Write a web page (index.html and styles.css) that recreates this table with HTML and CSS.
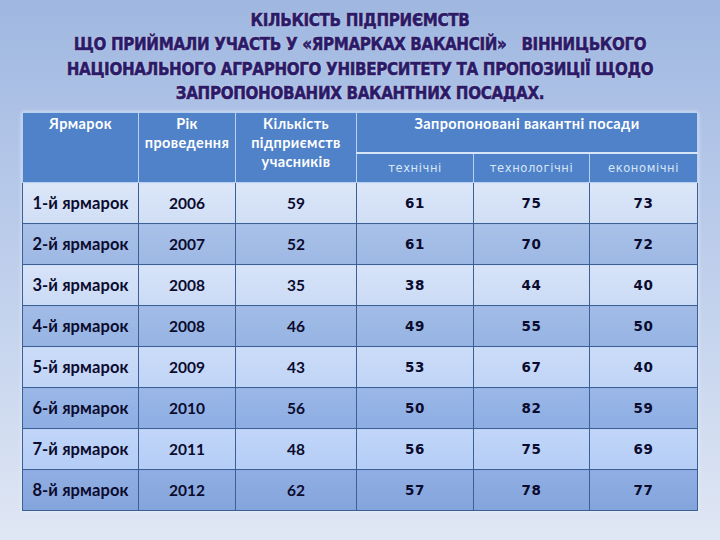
FILE: index.html
```html
<!DOCTYPE html>
<html lang="uk">
<head>
<meta charset="utf-8">
<title>Ярмарки вакансій</title>
<link rel="stylesheet" href="styles.css">
</head>
<body>
<div class="page">
  <h1 class="title">
    <span class="line">КІЛЬКІСТЬ ПІДПРИЄМСТВ</span>
    <span class="line">ЩО ПРИЙМАЛИ УЧАСТЬ У «ЯРМАРКАХ ВАКАНСІЙ» &nbsp; ВІННИЦЬКОГО</span>
    <span class="line">НАЦІОНАЛЬНОГО АГРАРНОГО УНІВЕРСИТЕТУ ТА ПРОПОЗИЦІЇ ЩОДО</span>
    <span class="line">ЗАПРОПОНОВАНИХ ВАКАНТНИХ ПОСАДАХ.</span>
  </h1>
  <table class="fairs">
    <colgroup>
      <col class="c1"><col class="c2"><col class="c3"><col class="c4"><col class="c5"><col class="c6">
    </colgroup>
    <thead>
      <tr class="h1row">
        <th rowspan="2" class="hmain">Ярмарок</th>
        <th rowspan="2" class="hmain">Рік<br>проведення</th>
        <th rowspan="2" class="hmain">Кількість<br>підприємств<br>учасників</th>
        <th colspan="3" class="hmain hgroup">Запропоновані вакантні посади</th>
      </tr>
      <tr class="h2row">
        <th class="hsub">технічні</th>
        <th class="hsub">технологічні</th>
        <th class="hsub">економічні</th>
      </tr>
    </thead>
    <tbody>
      <tr class="r1"><td class="name">1-й ярмарок</td><td class="num">2006</td><td class="num">59</td><td class="val">61</td><td class="val">75</td><td class="val">73</td></tr>
      <tr class="r2"><td class="name">2-й ярмарок</td><td class="num">2007</td><td class="num">52</td><td class="val">61</td><td class="val">70</td><td class="val">72</td></tr>
      <tr class="r3"><td class="name">3-й ярмарок</td><td class="num">2008</td><td class="num">35</td><td class="val">38</td><td class="val">44</td><td class="val">40</td></tr>
      <tr class="r4"><td class="name">4-й ярмарок</td><td class="num">2008</td><td class="num">46</td><td class="val">49</td><td class="val">55</td><td class="val">50</td></tr>
      <tr class="r5"><td class="name">5-й ярмарок</td><td class="num">2009</td><td class="num">43</td><td class="val">53</td><td class="val">67</td><td class="val">40</td></tr>
      <tr class="r6"><td class="name">6-й ярмарок</td><td class="num">2010</td><td class="num">56</td><td class="val">50</td><td class="val">82</td><td class="val">59</td></tr>
      <tr class="r7"><td class="name">7-й ярмарок</td><td class="num">2011</td><td class="num">48</td><td class="val">56</td><td class="val">75</td><td class="val">69</td></tr>
      <tr class="r8"><td class="name">8-й ярмарок</td><td class="num">2012</td><td class="num">62</td><td class="val">57</td><td class="val">78</td><td class="val">77</td></tr>
    </tbody>
  </table>
</div>
</body>
</html>
```

FILE: styles.css
```css
html, body {
  margin: 0;
  padding: 0;
}
body {
  width: 720px;
  height: 540px;
  overflow: hidden;
  background: linear-gradient(180deg, #9fb7e0 0%, #b3c6e8 30%, #cbd8ef 70%, #e0e7f4 100%);
  font-family: Lato, "Liberation Sans", sans-serif;
}
.page {
  display: flex;
  flex-direction: column;
  padding-top: 8px;
}
.title {
  margin: 0;
  display: flex;
  flex-direction: column;
  align-items: center;
  font-family: "DejaVu Sans Condensed", "DejaVu Sans", sans-serif;
  font-weight: bold;
  font-size: 16.8px;
  line-height: 24.3px;
  color: #2b1a68;
  -webkit-text-stroke: 0.6px #2b1a68;
  text-shadow: 0 0 1px #ffffff, 0 0 2px rgba(235, 240, 255, 0.9);
  letter-spacing: -0.3px;
  white-space: pre;
}
.fairs {
  margin: 7px 0 0 22px;
  width: 675px;
  table-layout: fixed;
  border-collapse: collapse;
  box-shadow: 0 0 4px rgba(240, 245, 255, 0.8);
}
.c1 { width: 116px; }
.c2 { width: 97px; }
.c3 { width: 121px; }
.c4 { width: 117px; }
.c5 { width: 116px; }
.c6 { width: 108px; }

th {
  background: #4f82c9;
  color: #ffffff;
  padding: 0;
  border: 1px solid #b9d1f0;
}
.hmain {
  vertical-align: top;
  font-weight: bold;
  font-size: 14.5px;
  line-height: 19px;
  letter-spacing: 0.4px;
  padding-top: 1px;
}
.h1row .hgroup {
  height: 38px;
  border-bottom: 2px solid #d6e6f8;
}
.hsub {
  height: 28px;
  font-family: "DejaVu Sans", sans-serif;
  font-weight: normal;
  font-size: 11.5px;
  letter-spacing: 0.6px;
  color: #d9e6f6;
  vertical-align: middle;
}

td {
  height: 40px;
  padding: 0;
  text-align: center;
  vertical-align: middle;
  color: #0b0b2e;
  font-weight: bold;
  border: 1px solid #3c5f96;
}
.name {
  font-size: 16.5px;
  letter-spacing: 0.1px;
}
.num {
  font-size: 15.5px;
}
.val {
  font-family: "DejaVu Sans", sans-serif;
  font-size: 13.5px;
  letter-spacing: 0.6px;
}
.r1 td { background: linear-gradient(180deg, #dbe6f8, #d0def5); }
.r2 td { background: linear-gradient(180deg, #a9c1e8, #9db8e4); }
.r3 td { background: linear-gradient(180deg, #d6e3f8, #cbdaf5); }
.r4 td { background: linear-gradient(180deg, #a2bce7, #95b3e2); }
.r5 td { background: linear-gradient(180deg, #cbdcf8, #c0d4f6); }
.r6 td { background: linear-gradient(180deg, #9ab7e7, #8dade2); }
.r7 td { background: linear-gradient(180deg, #c0d5f8, #b5cdf6); }
.r8 td { background: linear-gradient(180deg, #90aee3, #84a4dc); }
```
